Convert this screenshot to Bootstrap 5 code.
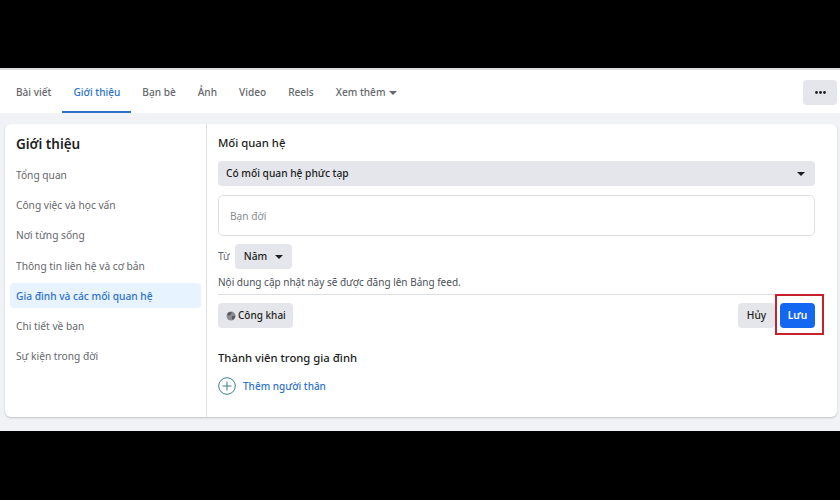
<!DOCTYPE html>
<html lang="vi">
<head>
  <meta charset="UTF-8">
  <title>Giới thiệu</title>
  <link href="https://cdn.jsdelivr.net/npm/bootstrap@5.3.3/dist/css/bootstrap.min.css" rel="stylesheet">
  <style>
    html, body { height: 500px; overflow: hidden; }
    body { background: #000; font-family: "Noto Sans", "Liberation Sans", sans-serif; font-size: 10px; color: #1c1e21; padding-top: 68px; }
    .fb-page { height: 363px; background: #f0f2f5; border-top: 2px solid #dcdee2; }
    .fb-tabs { height: 43px; background: #fff; padding: 2px 3px 0 5px; }
    .fb-tab { height: 41px; padding: 2px 11px 0; color: #65676b; font-size: 10.1px; font-weight: 500; text-decoration: none; display: flex; align-items: center; border-bottom: 2px solid transparent; }
    .fb-tab.is-active { color: #2d72c8; border-bottom-color: #2d72c8; }
    .fb-more { width: 34px; height: 25px; background: #e4e6eb; border: 0; border-radius: 4px; padding: 0; }
    .fb-card { margin: 11px 3px 0 5px; height: 293px; background: #fff; border-radius: 6px; box-shadow: 0 1px 2px rgba(0,0,0,.2); }
    .fb-side { width: 202px; flex: none; border-right: 1px solid #dddfe2; padding: 10px 5px 0 5px; }
    .fb-side h2 { font-size: 13.5px; font-weight: 600; margin: 0 0 0 6px; line-height: 20px; color: #1c1e21; }
    .fb-side-link { display: flex; align-items: center; height: 25px; margin-top: 5.2px; padding: 1px 0 0 6px; border-radius: 4px; color: #65676b; text-decoration: none; font-size: 10.2px; }
    .fb-side-first { margin-top: 8.6px; }
    .fb-side-link.is-active { color: #2d72c8; background: #e7f3ff; font-weight: 500; }
    .fb-main { padding: 10px 22px 0 11px; }
    .fb-label { font-size: 11.3px; line-height: 18px; color: #1c1e21; font-weight: 500; }
    .fb-select { height: 25px; margin-top: 9px; padding: 0 10px 0 8px; background: #e4e6eb; border: 0; border-radius: 4px; color: #1c1e21; font-size: 10.2px; font-weight: 500; }
    .fb-input { height: 41px; margin-top: 9px; padding: 0 11px; border: 1px solid #dddfe2; border-radius: 5px; font-size: 10.2px; box-shadow: none; }
    .fb-input::placeholder { color: #8a8d91; }
    .fb-gray { height: 25px; background: #e4e6eb; border: 0; border-radius: 4px; padding: 0 8px; color: #1c1e21; font-size: 10.2px; font-weight: 500; }
    .fb-since { margin-top: 8px; gap: 5px; color: #65676b; }
    .fb-since .fb-gray { padding: 0 9px; }
    .fb-note { margin-top: 5px; line-height: 16px; padding-bottom: 4px; border-bottom: 1px solid #dddfe2; color: #4b4f56; font-size: 10px; }
    .fb-actions { margin-top: 8px; }
    .fb-public { padding: 0 7px 0 8px; gap: 2px; font-size: 10px; }
    .fb-save { height: 25px; width: 35px; background: #1467f0; color: #fff; border: 0; border-radius: 4px; padding: 0; font-size: 10.2px; font-weight: 600; }
    .fb-cancel { width: 37px; padding: 0; justify-content: center; }
    .fb-btn-pair { gap: 5px; }
    .fb-redbox { position: absolute; top: -9px; right: -9px; bottom: -7px; left: -5px; border: 2px solid #c8202c; pointer-events: none; }
    .fb-add { margin-top: 10px; gap: 7px; color: #2d72c8; text-decoration: none; font-size: 10px; font-weight: 500; }
    .fb-arrow { display: inline-block; width: 0; height: 0; border: 4px solid transparent; border-top: 4px solid currentColor; border-bottom: 0; }
    .fb-section { margin-top: 21px; }
  </style>
</head>
<body>
  <div class="fb-page">
    <nav class="fb-tabs d-flex align-items-center justify-content-between">
      <div class="d-flex">
        <a class="fb-tab" href="#">Bài viết</a>
        <a class="fb-tab is-active" href="#">Giới thiệu</a>
        <a class="fb-tab" href="#">Bạn bè</a>
        <a class="fb-tab" href="#">Ảnh</a>
        <a class="fb-tab" href="#">Video</a>
        <a class="fb-tab" href="#">Reels</a>
        <a class="fb-tab gap-1" href="#">Xem thêm <span class="fb-arrow"></span></a>
      </div>
      <button class="fb-more d-flex align-items-center justify-content-center" type="button" aria-label="Thêm">
        <svg width="11" height="3" viewBox="0 0 11 3"><circle cx="1.500" cy="1.500" r="1.400" fill="#1c1e21"/><circle cx="5.500" cy="1.500" r="1.400" fill="#1c1e21"/><circle cx="9.500" cy="1.500" r="1.400" fill="#1c1e21"/></svg>
      </button>
    </nav>

    <div class="fb-card d-flex">
      <aside class="fb-side">
        <h2>Giới thiệu</h2>
        <a class="fb-side-link fb-side-first" href="#">Tổng quan</a>
        <a class="fb-side-link" href="#">Công việc và học vấn</a>
        <a class="fb-side-link" href="#">Nơi từng sống</a>
        <a class="fb-side-link" href="#">Thông tin liên hệ và cơ bản</a>
        <a class="fb-side-link is-active" href="#">Gia đình và các mối quan hệ</a>
        <a class="fb-side-link" href="#">Chi tiết về bạn</a>
        <a class="fb-side-link" href="#">Sự kiện trong đời</a>
      </aside>

      <main class="fb-main flex-grow-1">
        <div class="fb-label">Mối quan hệ</div>
        <button class="fb-select w-100 d-flex align-items-center justify-content-between" type="button">
          <span>Có mối quan hệ phức tạp</span><span class="fb-arrow"></span>
        </button>
        <input class="form-control fb-input" type="text" placeholder="Bạn đời">
        <div class="fb-since d-flex align-items-center">
          <span>Từ</span>
          <button class="fb-gray d-flex align-items-center gap-2" type="button">Năm <span class="fb-arrow"></span></button>
        </div>
        <div class="fb-note">Nội dung cập nhật này sẽ được đăng lên Bảng feed.</div>
        <div class="fb-actions d-flex align-items-center justify-content-between">
          <button class="fb-gray fb-public d-flex align-items-center" type="button">
            <svg width="10" height="10" viewBox="0 0 10 10"><circle cx="5" cy="5" r="4.500" fill="#8b8d92"/><path d="M1.200 3.200C2 1.500 3.800.8 5.300 1c.8.700.5 1.500-.3 2-.9.500-.6 1.400-1.500 1.500-.9.100-1.700-.4-2.300-1.300zM6.500 5c1-.5 2-.4 2.800 0-.2 1.600-1.200 3-2.600 3.700-.9-.9-1.100-2.700-.2-3.700z" fill="#55575c"/></svg>
            Công khai
          </button>
          <div class="fb-btn-pair d-flex">
            <button class="fb-gray fb-cancel d-flex align-items-center" type="button">Hủy</button>
            <div class="position-relative d-flex">
              <button class="fb-save" type="button">Lưu</button>
              <span class="fb-redbox"></span>
            </div>
          </div>
        </div>
        <div class="fb-label fb-section">Thành viên trong gia đình</div>
        <a class="fb-add d-flex align-items-center" href="#">
          <svg width="18" height="18" viewBox="0 0 18 18"><circle cx="9" cy="9" r="8.300" fill="none" stroke="#3b7f96" stroke-width="1"/><path d="M9 4.500v9M4.500 9h9" stroke="#3b7f96" stroke-width="1" fill="none"/></svg>
          Thêm người thân
        </a>
      </main>
    </div>
  </div>
</body>
</html>
